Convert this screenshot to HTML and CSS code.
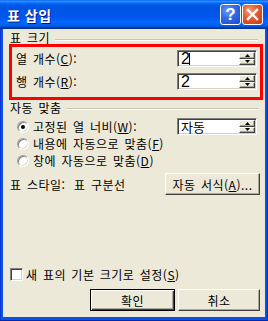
FILE: index.html
```html
<!DOCTYPE html>
<html lang="ko">
<head>
    <meta charset="UTF-8">
    <meta name="viewport" content="width=device-width, initial-scale=1.0">
    <title>표 삽입</title>
    <link rel="stylesheet" href="styles.css">
</head>
<body>
    <div class="window">
        <div class="titlebar">
            <span class="title">표 삽입</span>
            <div class="title-buttons">
                <div class="tb-btn help">?</div>
                <div class="tb-btn close">
                    <svg width="21" height="21" viewBox="0 0 21 21">
                        <path d="M6 6 L15 15 M15 6 L6 15" stroke="#fff" stroke-width="2.4" stroke-linecap="square"/>
                    </svg>
                </div>
            </div>
        </div>

        <div class="client">
            <div class="group-title"><span>표 크기</span><i class="rule"></i></div>

            <div class="highlight">
                <div class="field-row">
                    <span>열 개수(<u>C</u>):</span>
                    <div class="spin-edit">
                        <span class="value">2<i class="caret"></i></span>
                        <div class="spin">
                            <span class="spin-btn"><svg width="5" height="3" viewBox="0 0 5 3"><path d="M0 3 H5 L2.5 0 Z" fill="#000"/></svg></span>
                            <span class="spin-btn"><svg width="5" height="3" viewBox="0 0 5 3"><path d="M0 0 H5 L2.5 3 Z" fill="#000"/></svg></span>
                        </div>
                    </div>
                </div>
                <div class="field-row">
                    <span>행 개수(<u>R</u>):</span>
                    <div class="spin-edit">
                        <span class="value">2</span>
                        <div class="spin">
                            <span class="spin-btn"><svg width="5" height="3" viewBox="0 0 5 3"><path d="M0 3 H5 L2.5 0 Z" fill="#000"/></svg></span>
                            <span class="spin-btn"><svg width="5" height="3" viewBox="0 0 5 3"><path d="M0 0 H5 L2.5 3 Z" fill="#000"/></svg></span>
                        </div>
                    </div>
                </div>
            </div>

            <div class="group-title second"><span>자동 맞춤</span><i class="rule"></i></div>

            <div class="option-row">
                <span class="radio checked"></span>
                <span>고정된 열 너비(<u>W</u>):</span>
                <div class="spin-edit">
                    <span class="value word">자동</span>
                    <div class="spin">
                        <span class="spin-btn"><svg width="5" height="3" viewBox="0 0 5 3"><path d="M0 3 H5 L2.5 0 Z" fill="#000"/></svg></span>
                        <span class="spin-btn"><svg width="5" height="3" viewBox="0 0 5 3"><path d="M0 0 H5 L2.5 3 Z" fill="#000"/></svg></span>
                    </div>
                </div>
            </div>
            <div class="option-row">
                <span class="radio"></span>
                <span>내용에 자동으로 맞춤(<u>F</u>)</span>
            </div>
            <div class="option-row">
                <span class="radio"></span>
                <span>창에 자동으로 맞춤(<u>D</u>)</span>
            </div>

            <div class="style-row">
                <span class="style-label">표 스타일:</span>
                <span>표 구분선</span>
                <div class="btn format">자동 서식(<u>A</u>)...</div>
            </div>

            <div class="check-row">
                <span class="checkbox"></span>
                <span>새 표의 기본 크기로 설정(<u>S</u>)</span>
            </div>

            <div class="actions">
                <div class="btn default ok">확인</div>
                <div class="btn cancel">취소</div>
            </div>
        </div>
    </div>
</body>
</html>
```

FILE: styles.css
```css
* {
    box-sizing: border-box;
}

body {
    margin: 0;
    background: #fff;
    font-family: "Noto Sans CJK KR", "DejaVu Sans", sans-serif;
    font-size: 12px;
    letter-spacing: 0.5px;
    word-spacing: 1.5px;
    color: #000;
}

u {
    text-decoration: underline;
    text-underline-offset: 1px;
}

.window {
    width: 268px;
    height: 321px;
    display: flex;
    flex-direction: column;
    background: #0b50e6;
    box-shadow: inset 0 -1px #0028a8, inset 1px 0 #0838d0, inset -1px 0 #0030c0;
}

/* title bar */
.titlebar {
    height: 29px;
    display: flex;
    align-items: center;
    padding: 0 5px 0 7px;
    background: linear-gradient(to bottom, #0058ee 0%, #3593ff 4%, #288eff 6%, #127dff 8%, #036ffc 10%, #0262ee 14%, #0057e5 20%, #0054e3 24%, #0055eb 56%, #005bf5 66%, #026afe 76%, #0062ef 86%, #0052d6 92%, #0040ab 94%, #003092 100%);
}

.title {
    color: #fff;
    font-weight: bold;
    font-size: 14px;
    letter-spacing: 0.5px;
    word-spacing: 0;
    text-shadow: 1px 1px #0a1883;
}

.title-buttons {
    margin-left: auto;
    display: flex;
    gap: 1px;
}

.tb-btn {
    width: 21px;
    height: 21px;
    border: 1px solid #fff;
    border-radius: 3px;
    display: flex;
    align-items: center;
    justify-content: center;
}

.help {
    background: radial-gradient(circle at 35% 30%, #6a9cf8 0%, #3169e6 45%, #1c48c8 100%);
    color: #fff;
    font-family: "Liberation Sans", sans-serif;
    font-weight: bold;
    font-size: 17px;
    letter-spacing: 0;
}

.close {
    background: radial-gradient(circle at 35% 30%, #f39a78 0%, #e35a30 45%, #c23a14 100%);
}

.close svg {
    display: block;
    margin: -1px;
}

/* client area */
.client {
    flex: 1;
    margin: 0 3px 4px 3px;
    padding: 0 8px 0 7px;
    background: #ece9d8;
    display: flex;
    flex-direction: column;
}

.group-title {
    margin-top: 3px;
    height: 12px;
    line-height: 12px;
    display: flex;
    align-items: center;
    margin-right: -1px;
}

.group-title.second {
    margin-top: 1px;
    height: 14px;
    line-height: 14px;
}

.group-title .rule {
    flex: 1;
    margin-left: 5px;
    margin-top: 4px;
    height: 2px;
    border-top: 1px solid #c8c5b5;
    border-bottom: 1px solid #fff;
}

.group-title.second .rule {
    margin-top: 1px;
}

.highlight {
    margin: 0 -6px 0 -1px;
    border: 3px solid #ff0000;
    padding: 3px 3px 7px 4px;
    display: flex;
    flex-direction: column;
    gap: 6px;
}

.field-row {
    height: 17px;
    display: flex;
    align-items: center;
    justify-content: space-between;
}

/* spin edit */
.spin-edit {
    width: 80px;
    height: 17px;
    display: flex;
    background: #fff;
    border: 1px solid;
    border-color: #808080 #fff #fff #808080;
    box-shadow: inset 1px 1px #404040, inset -1px -1px #d4d0c8;
    padding: 1px;
}

.spin-edit .value {
    flex: 1;
    display: flex;
    align-items: center;
    padding-left: 2px;
    font-family: "Liberation Sans", sans-serif;
    font-size: 16px;
    line-height: 13px;
    letter-spacing: 0;
}

.spin-edit .value.word {
    font-family: "Noto Sans CJK KR", sans-serif;
    font-size: 13px;
}

.caret {
    display: inline-block;
    width: 1px;
    height: 12px;
    background: #000;
    margin-left: -1px;
}

.spin {
    width: 16px;
    display: flex;
    flex-direction: column;
}

.spin-btn {
    flex: 1;
    display: flex;
    align-items: center;
    justify-content: center;
    background: #ece9d8;
    border: 1px solid;
    border-color: #fff #404040 #404040 #fff;
    box-shadow: inset -1px -1px #aca899;
}

.spin-btn svg {
    display: block;
}

.option-row {
    height: 17px;
    display: flex;
    align-items: center;
}

.group-title.second + .option-row {
    margin-top: 3px;
}

.option-row .spin-edit {
    margin-left: auto;
}

.radio {
    width: 12px;
    height: 12px;
    margin: 0 4px 0 7px;
    border-radius: 50%;
    background: #fff;
    border: 1px solid;
    border-color: #a0a0a0 #fff #fff #a0a0a0;
    box-shadow: inset 1px 1px #808080, inset -1px -1px #e0ddd0;
    position: relative;
}

.radio.checked::after {
    content: "";
    position: absolute;
    left: 3px;
    top: 3px;
    width: 4px;
    height: 4px;
    border-radius: 50%;
    background: #000;
}

.style-row {
    margin-top: 4px;
    margin-right: -3px;
    height: 22px;
    display: flex;
    align-items: center;
}

.style-label {
    width: 64px;
}

.btn {
    height: 22px;
    display: flex;
    align-items: center;
    justify-content: center;
    background: #ece9d8;
    border: 1px solid;
    border-color: #fff #404040 #404040 #fff;
    box-shadow: inset -1px -1px #aca899;
}

.btn.format {
    margin-left: auto;
    width: 95px;
}

.btn.default {
    border: 1px solid #000;
    box-shadow: inset 1px 1px #fff, inset -1px -1px #404040, inset -2px -2px #aca899;
}

.check-row {
    margin-top: 71px;
    height: 16px;
    display: flex;
    align-items: center;
}

.checkbox {
    width: 13px;
    height: 13px;
    margin-right: 3px;
    background: #fff;
    border: 1px solid;
    border-color: #808080 #fff #fff #808080;
    box-shadow: inset 1px 1px #404040, inset -1px -1px #d4d0c8;
}

.actions {
    margin-top: 7px;
    margin-right: -3px;
    display: flex;
    justify-content: flex-end;
    gap: 3px;
}

.btn.ok {
    width: 85px;
}

.btn.cancel {
    width: 82px;
}
```
